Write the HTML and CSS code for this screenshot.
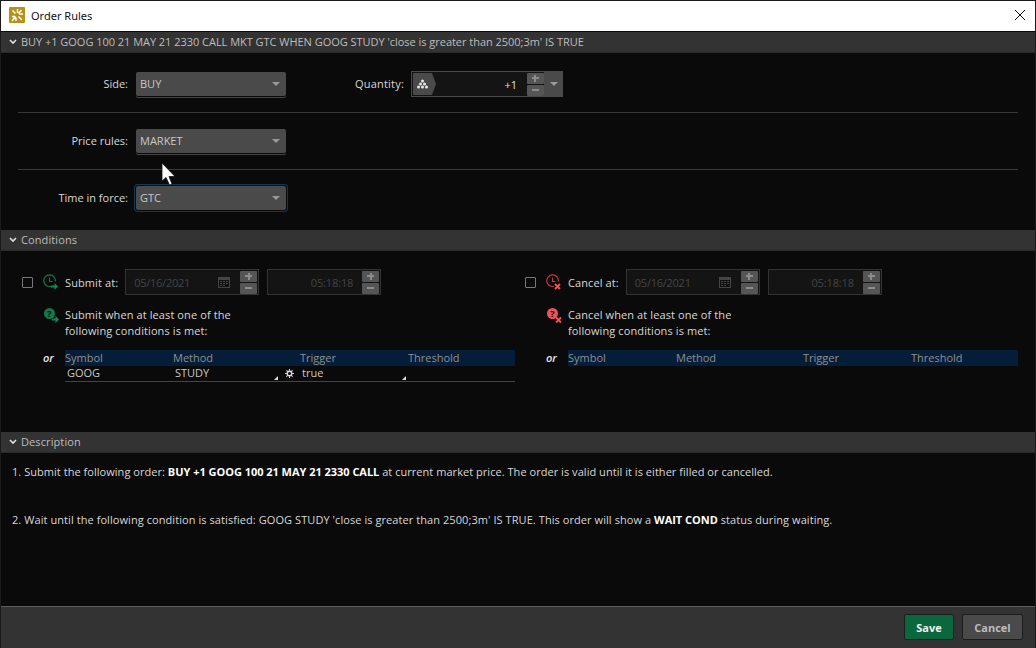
FILE: index.html
```html
<!DOCTYPE html>
<html lang="en">
<head>
    <meta charset="UTF-8">
    <title>Order Rules</title>
    <link rel="stylesheet" href="styles.css">
</head>
<body>
    <div class="window">
        <header class="titlebar">
            <svg class="app-icon" viewBox="0 0 16 16">
                <rect width="16" height="16" rx="1" fill="#b8901a"/>
                <path d="M8.500 2v4M7 10.500v3.500M3 9.500h3M10 7h4M3.500 3.500l3 3M12.500 3L9.500 6.500M3 14l3.500-4.500M13 13L9.500 9.500" stroke="#fff" stroke-width="1.500" fill="none"/>
            </svg>
            <span class="title">Order Rules</span>
            <svg class="close" viewBox="0 0 10 10"><path d="M0 0L10 10M10 0L0 10" stroke="#111" stroke-width="1"/></svg>
        </header>

        <div class="bar order-bar">
            <svg class="chevron" viewBox="0 0 8 6"><path d="M1 1l3 3 3-3" stroke="#ddd" stroke-width="1.700" fill="none"/></svg>
            <span>BUY +1 GOOG 100 21 MAY 21 2330 CALL MKT GTC WHEN GOOG STUDY 'close is greater than 2500;3m' IS TRUE</span>
        </div>

        <section class="order">
            <div class="form-row first">
                <label class="form-label">Side:</label>
                <div class="select"><span>BUY</span><i class="caret"></i></div>
                <label class="qty-label">Quantity:</label>
                <div class="qty">
                    <div class="qty-tag">
                        <svg viewBox="0 0 11 10" width="11" height="10"><g fill="#e8e8e8"><circle cx="5.500" cy="2" r="1.500"/><circle cx="3.500" cy="5" r="1.500"/><circle cx="7.500" cy="5" r="1.500"/><circle cx="1.500" cy="8" r="1.500"/><circle cx="5.500" cy="8" r="1.500"/><circle cx="9.500" cy="8" r="1.500"/></g></svg>
                    </div>
                    <span class="qty-value">+1</span>
                    <div class="stepper"><i class="step up"></i><i class="step"></i></div>
                </div>
                <div class="qty-drop"><i class="caret"></i></div>
            </div>
            <div class="form-row">
                <label class="form-label">Price rules:</label>
                <div class="select"><span>MARKET</span><i class="caret"></i></div>
            </div>
            <div class="form-row last">
                <label class="form-label">Time in force:</label>
                <div class="select focused"><span>GTC</span><i class="caret"></i></div>
            </div>
        </section>

        <div class="bar">
            <svg class="chevron" viewBox="0 0 8 6"><path d="M1 1l3 3 3-3" stroke="#ddd" stroke-width="1.700" fill="none"/></svg>
            <span>Conditions</span>
        </div>

        <section class="conditions">
            <div class="cond-col">
                <div class="at-row">
                    <span class="check"></span>
                    <svg class="at-icon" viewBox="0 0 15 16">
                        <path d="M8 12.300A5.800 5.800 0 1 1 12.300 7.500" stroke="#0f7a4a" stroke-width="1.200" fill="none"/>
                        <path d="M6.500 3.500v4h3" stroke="#0f7a4a" stroke-width="1.100" fill="none"/>
                        <path d="M8 11.500h3.500V9l3.500 3.500-3.500 3.500v-2.500H8z" fill="#0f8a52"/>
                    </svg>
                    <span class="at-label">Submit at:</span>
                    <div class="field date"><span>05/16/2021</span>
                        <svg class="cal" viewBox="0 0 12 12"><path d="M0 1h12v11H0z" fill="#444"/><path d="M1 4h10v7H1z" fill="#111"/><path d="M2 5h2v1H2zM5 5h2v1H5zM8 5h2v1H8zM2 7h2v1H2zM5 7h2v1H5zM8 7h2v1H8zM2 9h2v1H2zM5 9h2v1H5z" fill="#444"/></svg>
                        <div class="stepper"><i class="step up"></i><i class="step"></i></div>
                    </div>
                    <div class="field time"><span>05:18:18</span>
                        <div class="stepper"><i class="step up"></i><i class="step"></i></div>
                    </div>
                </div>
                <div class="when-row">
                    <svg class="when-icon" viewBox="0 0 15 15">
                        <circle cx="5.500" cy="5.500" r="5.500" fill="#0f7a4a"/>
                        <text x="5.500" y="9" class="q-mark">?</text>
                        <path d="M8 10.500h3.500V8l3.500 3.500-3.500 3.500v-2.500H8z" fill="#0f8a52"/>
                    </svg>
                    <p>Submit when at least one of the<br>following conditions is met:</p>
                </div>
                <div class="table-wrap">
                    <span class="or">or</span>
                    <div class="table">
                        <div class="t-head"><span>Symbol</span><span>Method</span><span>Trigger</span><span>Threshold</span></div>
                        <div class="t-row">
                            <span>GOOG</span>
                            <span class="t-cell">STUDY<i class="corner"></i></span>
                            <span class="t-cell t-trigger">
                                <svg class="gear" viewBox="0 0 10 10"><circle cx="5" cy="5" r="2.500" fill="none" stroke="#ddd" stroke-width="1.500"/><path d="M5 0v2M5 8v2M0 5h2M8 5h2M1.500 1.500l1.500 1.500M8.500 1.500L7 3M1.500 8.500L3 7M8.500 8.500L7 7" stroke="#ddd" stroke-width="1.200"/></svg>
                                true<i class="corner"></i>
                            </span>
                            <span></span>
                        </div>
                    </div>
                </div>
            </div>

            <div class="cond-col">
                <div class="at-row">
                    <span class="check"></span>
                    <svg class="at-icon" viewBox="0 0 15 16">
                        <path d="M8 12.300A5.800 5.800 0 1 1 12.300 7.500" stroke="#c43a40" stroke-width="1.200" fill="none"/>
                        <path d="M6.500 3.500v4h3" stroke="#c43a40" stroke-width="1.100" fill="none"/>
                        <path d="M9 10l5 5M14 10l-5 5" stroke="#f0525a" stroke-width="1.800"/>
                    </svg>
                    <span class="at-label">Cancel at:</span>
                    <div class="field date"><span>05/16/2021</span>
                        <svg class="cal" viewBox="0 0 12 12"><path d="M0 1h12v11H0z" fill="#444"/><path d="M1 4h10v7H1z" fill="#111"/><path d="M2 5h2v1H2zM5 5h2v1H5zM8 5h2v1H8zM2 7h2v1H2zM5 7h2v1H5zM8 7h2v1H8zM2 9h2v1H2zM5 9h2v1H5z" fill="#444"/></svg>
                        <div class="stepper"><i class="step up"></i><i class="step"></i></div>
                    </div>
                    <div class="field time"><span>05:18:18</span>
                        <div class="stepper"><i class="step up"></i><i class="step"></i></div>
                    </div>
                </div>
                <div class="when-row">
                    <svg class="when-icon" viewBox="0 0 15 15">
                        <circle cx="5.500" cy="5.500" r="5.500" fill="#f0525a"/>
                        <text x="5.500" y="9" class="q-mark">?</text>
                        <path d="M9 9.500l5 5M14 9.500l-5 5" stroke="#f0525a" stroke-width="1.800"/>
                    </svg>
                    <p>Cancel when at least one of the<br>following conditions is met:</p>
                </div>
                <div class="table-wrap">
                    <span class="or">or</span>
                    <div class="table">
                        <div class="t-head"><span>Symbol</span><span>Method</span><span>Trigger</span><span>Threshold</span></div>
                    </div>
                </div>
            </div>
        </section>

        <div class="bar">
            <svg class="chevron" viewBox="0 0 8 6"><path d="M1 1l3 3 3-3" stroke="#ddd" stroke-width="1.700" fill="none"/></svg>
            <span>Description</span>
        </div>

        <section class="description">
            <p class="line-one">1. Submit the following order: <b>BUY +1 GOOG 100 21 MAY 21 2330 CALL</b> at current market price. The order is valid until it is either filled or cancelled.</p>
            <p>2. Wait until the following condition is satisfied: GOOG STUDY 'close is greater than 2500;3m' IS TRUE. This order will show a <b>WAIT COND</b> status during waiting.</p>
        </section>

        <footer class="footer">
            <button class="btn save">Save</button>
            <button class="btn cancel">Cancel</button>
        </footer>

        <svg class="cursor" viewBox="0 0 15 24" width="15" height="24"><path d="M1 1L1 19L5 15.500L8.500 23L11 22L8 14.500L14 14.500Z" fill="#fff" stroke="#111" stroke-width="0.800"/></svg>
    </div>
</body>
</html>
```

FILE: styles.css
```css
/* Base */
* {
    margin: 0;
    padding: 0;
    box-sizing: border-box;
}

body {
    background: #0a0a0a;
    color: #d8d8d8;
    font-family: 'Open Sans', sans-serif;
    font-size: 11px;
    overflow: hidden;
}

.window {
    position: relative;
    width: 1036px;
    height: 648px;
    display: flex;
    flex-direction: column;
    background: #0a0a0a;
    border: 1px solid #1a1a1a;
    border-width: 1px 1px 0 1px;
}

/* Title bar */
.titlebar {
    height: 30px;
    flex: none;
    background: #fff;
    display: flex;
    align-items: center;
    padding: 0 10px 2px 8px;
    margin-bottom: 1px;
}

.app-icon {
    width: 16px;
    height: 16px;
    margin-right: 6px;
}

.title {
    font-family: 'Noto Sans', sans-serif;
    font-size: 11px;
    color: #111;
    flex: 1;
}

.close {
    width: 10px;
    height: 10px;
}

/* Section bars */
.bar {
    height: 21px;
    flex: none;
    background: #333;
    color: #bdbdbd;
    display: flex;
    align-items: center;
    padding: 0 0 1px 8px;
    border-bottom: 1px solid #2a2a2a;
    letter-spacing: 0.1px;
}

.order-bar {
    letter-spacing: -0.03px;
}

.chevron {
    width: 8px;
    height: 6px;
    margin-right: 4px;
}

/* Order form */
.order {
    height: 177px;
    flex: none;
    padding: 0 17px;
}

.form-row {
    display: flex;
    align-items: flex-start;
    padding-top: 16px;
    height: 57px;
    border-bottom: 1px solid #383838;
}

.form-row.first {
    padding-top: 19px;
    height: 60px;
}

.form-row.last {
    border-bottom: none;
}

.form-label {
    width: 110px;
    text-align: right;
    line-height: 24px;
    margin-right: 8px;
    color: #d8d8d8;
}

.select {
    width: 150px;
    height: 24px;
    background: #4a4a4a;
    border-radius: 2px;
    box-shadow: 0 1px 0 #0a0a0a, 0 2px 0 #444;
    color: #c8c8c8;
    display: flex;
    align-items: center;
    justify-content: space-between;
    padding: 0 6px 2px 4px;
}

.select.focused {
    box-shadow: 0 0 0 1px #0a0a0a, 0 0 0 2px #0e3a58;
}

.caret {
    width: 0;
    height: 0;
    border-left: 4px solid transparent;
    border-right: 4px solid transparent;
    border-top: 4px solid #999;
}

.select .caret {
    margin-top: 2px;
}

.qty-label {
    margin-left: 69px;
    margin-right: 7px;
    line-height: 24px;
    letter-spacing: 0.2px;
}

.qty {
    width: 134px;
    height: 26px;
    margin-top: -1px;
    border: 1px solid #4a4a4a;
    background: #141414;
    display: flex;
    align-items: center;
    padding: 1px 0 1px 1px;
}

.qty-tag {
    width: 23px;
    height: 22px;
    background: #4a4a4a;
    clip-path: polygon(0 0, 19px 0, 100% 50%, 19px 100%, 0 100%);
    display: flex;
    align-items: center;
    padding-left: 4px;
}

.qty-value {
    flex: 1;
    text-align: right;
    color: #e0e0e0;
    padding-right: 10px;
}

.qty-drop {
    width: 18px;
    height: 26px;
    margin-top: -1px;
    background: #4a4a4a;
    display: flex;
    align-items: center;
    justify-content: center;
}

.stepper {
    display: flex;
    flex-direction: column;
    gap: 1px;
}

/* plus and minus are drawn with two centred bars */
.step {
    display: block;
    width: 17px;
    height: 11px;
    border-radius: 1px;
    background:
        linear-gradient(#8c8c8c, #8c8c8c) center / 7px 2px no-repeat,
        #555;
}

.step.up {
    background:
        linear-gradient(#8c8c8c, #8c8c8c) center / 7px 2px no-repeat,
        linear-gradient(#8c8c8c, #8c8c8c) center / 2px 7px no-repeat,
        #555;
}

/* Conditions */
.conditions {
    height: 181px;
    flex: none;
    display: flex;
    padding: 18px 0 0 21px;
}

.cond-col {
    width: 503px;
}

.at-row {
    display: flex;
    align-items: center;
    height: 26px;
}

.check {
    width: 11px;
    height: 11px;
    border: 1px solid #777;
    border-radius: 1px;
    margin-right: 10px;
}

.at-icon {
    width: 15px;
    height: 16px;
    margin-right: 7px;
}

.at-label {
    margin-right: 7px;
    letter-spacing: 0.1px;
}

.field {
    height: 26px;
    border: 1px solid #333;
    background: #141414;
    color: #444;
    display: flex;
    align-items: center;
    padding: 1px;
}

.field.date {
    width: 134px;
    padding-left: 8px;
    margin-right: 8px;
}

.field.date span {
    flex: 1;
    letter-spacing: -0.25px;
}

.cal {
    width: 12px;
    height: 12px;
    margin-right: 10px;
}

.field.time {
    width: 114px;
    justify-content: flex-end;
}

.field.time span {
    margin-right: 9px;
    letter-spacing: -0.15px;
}

.when-row {
    display: flex;
    align-items: flex-start;
    margin: 12px 0 0 22px;
}

.when-icon {
    width: 15px;
    height: 15px;
    margin: 1px 6px 0 0;
}

.q-mark {
    font-size: 9px;
    font-weight: 700;
    text-anchor: middle;
    fill: #0a0a0a;
}

.when-row p {
    line-height: 16px;
    letter-spacing: 0.1px;
}

.table-wrap {
    display: flex;
    margin-top: 11px;
}

.or {
    width: 43px;
    padding-left: 21px;
    font-style: italic;
    font-weight: 600;
    line-height: 16px;
    color: #e8e8e8;
}

.table {
    width: 450px;
}

.t-head,
.t-row {
    display: grid;
    grid-template-columns: 108px 127px 108px 107px;
}

.t-head {
    height: 16px;
    line-height: 16px;
    background: #041d38;
    color: #909090;
}

.t-row {
    height: 16px;
    line-height: 14px;
    border-bottom: 1px solid #444;
    color: #c8c8c8;
}

.t-row > span {
    padding-left: 2px;
}

.t-cell {
    position: relative;
}

.gear {
    position: absolute;
    left: -15px;
    top: 3px;
    width: 9px;
    height: 9px;
}

.corner {
    position: absolute;
    right: 22px;
    bottom: 1px;
    width: 0;
    height: 0;
    border-left: 4px solid transparent;
    border-bottom: 4px solid #ddd;
}

.t-trigger .corner {
    right: 2px;
}

/* Description */
.description {
    flex: 1;
    padding: 10px 11px 0;
}

.description p {
    line-height: 18px;
    margin-bottom: 30px;
    letter-spacing: 0.07px;
}

.description p.line-one {
    letter-spacing: 0.04px;
}

.description b {
    color: #fff;
    letter-spacing: -0.03px;
}

/* Footer */
.footer {
    height: 42px;
    flex: none;
    background: #333;
    border-top: 1px solid #5a5a5a;
    display: flex;
    justify-content: flex-end;
    align-items: flex-start;
    gap: 8px;
    padding: 7px 12px 0 0;
}

.btn {
    height: 26px;
    border: 1px solid #1c1c1c;
    border-radius: 2px;
    font-family: 'Open Sans', sans-serif;
    font-size: 11px;
    font-weight: 700;
}

.save {
    width: 50px;
    background: #0b673e;
    color: #f0f0f0;
}

.cancel {
    width: 61px;
    background: #4a4a4a;
    color: #bcbcbc;
}

/* Mouse pointer over the form */
.cursor {
    position: absolute;
    left: 160px;
    top: 161px;
}
```
